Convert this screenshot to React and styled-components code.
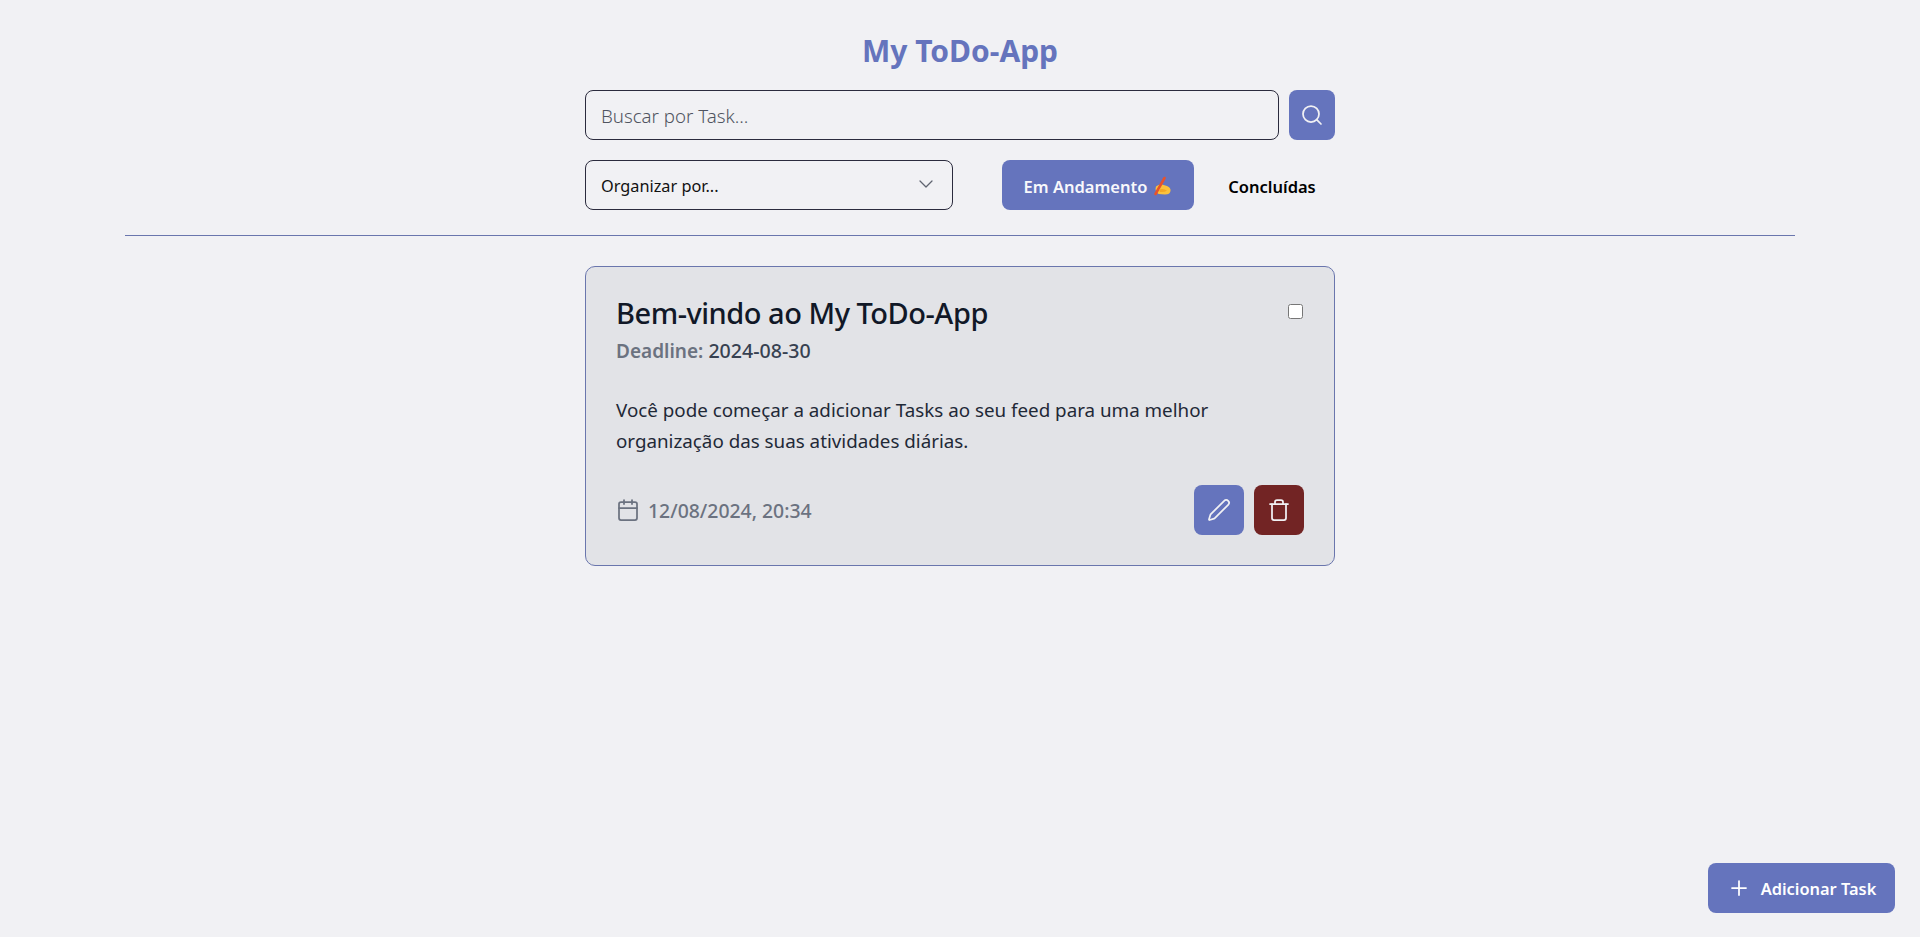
import styled, { createGlobalStyle } from "styled-components";
import { Search, Pen, Trash, Calendar, Plus, ChevronDown } from "lucide-react";

const GlobalStyle = createGlobalStyle`
  * { box-sizing: border-box; }
  body { margin: 0; background: #f1f1f4; font-family: "Noto Sans", "Open Sans", sans-serif; color: #111827; }
`

const Page = styled.div`min-height: 937px; display: flex; flex-direction: column; align-items: center;`
const Title = styled.h1`margin: 31px 0 0; height: 40px; line-height: 40px; font-size: 30px; font-weight: 700; color: #6574bd;`
const SearchRow = styled.div`margin-top: 19px; width: 750px; display: flex; gap: 10px;`
const SearchInput = styled.input`
  flex: 1; height: 50px; padding: 0 15px; border: 1px solid #2b2b3d; border-radius: 8px;
  background: transparent; font: inherit; font-size: 18.7px; font-weight: 300;
  &::placeholder { color: #4f5460; }
`
const IconButton = styled.button`
  width: ${p => p.$wide ? 50 : 46}px; height: 50px; border: none; border-radius: 8px; padding: 0;
  display: flex; align-items: center; justify-content: center;
  background: ${p => p.$danger ? "#722424" : "#6574bd"}; color: #f1f1f4;
`
const FilterRow = styled.div`margin-top: 20px; width: 750px; display: flex; align-items: center;`
const SelectBox = styled.div`
  flex: none; width: 368px; height: 50px; padding: 2px 14px 0 15px; border: 1px solid #2b2b3d; border-radius: 8px;
  display: flex; align-items: center; justify-content: space-between; font-size: 16.3px; color: #111;
  svg { color: #5f6470; margin-top: -4px; }
`
const Tabs = styled.div`margin-left: 49px; display: flex; gap: 15px;`
const Tab = styled.button`
  flex: none; height: 50px; width: ${p => p.$active ? 192 : 126}px; border: none; border-radius: 8px; padding: 2px 0 0;
  display: flex; align-items: center; justify-content: center; gap: 5px;
  font: inherit; font-size: 16.5px; font-weight: 600;
  background: ${p => p.$active ? "#6574bd" : "transparent"}; color: ${p => p.$active ? "#f8f8fb" : "#000"};
`
const Divider = styled.hr`margin: 25px 0 0; width: 1670px; border: none; border-top: 1px solid #6a76ad;`
const Card = styled.article`
  margin-top: 30px; width: 750px; height: 300px; padding: 28px 30px 30px; background: #e2e3e7;
  border: 1px solid #6a76ad; border-radius: 10px; display: flex; flex-direction: column;
`
const CardHead = styled.div`display: flex; justify-content: space-between; align-items: flex-start;`
const CardTitle = styled.h2`margin: 0; font-size: 29px; line-height: 36px; letter-spacing: -0.48px; font-weight: 500; color: #111827;`
const Check = styled.input`margin: 9px 1px 0 0; width: 15px; height: 15px;`
const Deadline = styled.p`margin: 6px 0 0; font-size: 19.6px; line-height: 28px; font-weight: 500; color: #374151;
  span { color: #6b7280; font-size: 19px; font-weight: 600; }
`
const Description = styled.p`margin: 30px 0 0; font-size: 18.8px; line-height: 30.5px; color: #1f2937;`
const CardFoot = styled.div`margin-top: auto; display: flex; justify-content: space-between; align-items: center;`
const DateLabel = styled.div`display: flex; align-items: center; gap: 8px; font-size: 19.4px; font-weight: 500; color: #6b7280;`
const Actions = styled.div`display: flex; gap: 10px;`
const AddButton = styled.button`
  position: fixed; right: 25px; bottom: 24px; width: 187px; height: 50px; border: none; border-radius: 8px;
  display: flex; align-items: center; justify-content: center; gap: 10px;
  background: #6574bd; color: #fff; font: inherit; font-size: 16.4px; font-weight: 600;
`

// writing hand emoji, the glyph installed here has no colour pencil
const WritingHand = () => (
  <svg width="20" height="20" viewBox="0 0 20 20" role="img" aria-label="✍️">
    <path d="M4 10.5 Q7 8 10 8.5 L15 10 Q19 11.5 18.5 15 Q18 18.5 13 18.5 L6.5 18 Q2.5 15 4 10.5Z" fill="#fcc13b" />
    <path d="M3.5 18 L12.5 2" stroke="#e8522b" strokeWidth="2.6" strokeLinecap="round" />
    <path d="M7 13.5 Q11 12 15 14.5 Q12.5 16.5 8 16Z" fill="#f5a623" />
  </svg>
)

const App = () => {
  return (
    <Page>
      <GlobalStyle />
      <Title>My ToDo-App</Title>
      <SearchRow>
        <SearchInput placeholder="Buscar por Task..." />
        <IconButton><Search size={24} strokeWidth={1.75} /></IconButton>
      </SearchRow>
      <FilterRow>
        <SelectBox>Organizar por... <ChevronDown size={24} strokeWidth={1.25} /></SelectBox>
        <Tabs>
          <Tab $active>Em Andamento <WritingHand /></Tab>
          <Tab>Concluídas</Tab>
        </Tabs>
      </FilterRow>
      <Divider />
      <Card>
        <CardHead>
          <CardTitle>Bem-vindo ao My ToDo-App</CardTitle>
          <Check type="checkbox" />
        </CardHead>
        <Deadline><span>Deadline:</span> 2024-08-30</Deadline>
        <Description>Você pode começar a adicionar Tasks ao seu feed para uma melhor organização das suas atividades diárias.</Description>
        <CardFoot>
          <DateLabel><Calendar size={24} strokeWidth={1.75} />12/08/2024, 20:34</DateLabel>
          <Actions>
            <IconButton $wide><Pen size={24} strokeWidth={1.75} /></IconButton>
            <IconButton $wide $danger><Trash size={24} strokeWidth={1.75} /></IconButton>
          </Actions>
        </CardFoot>
      </Card>
      <AddButton><Plus size={24} strokeWidth={1.75} />Adicionar Task</AddButton>
    </Page>
  )
}
export default App
